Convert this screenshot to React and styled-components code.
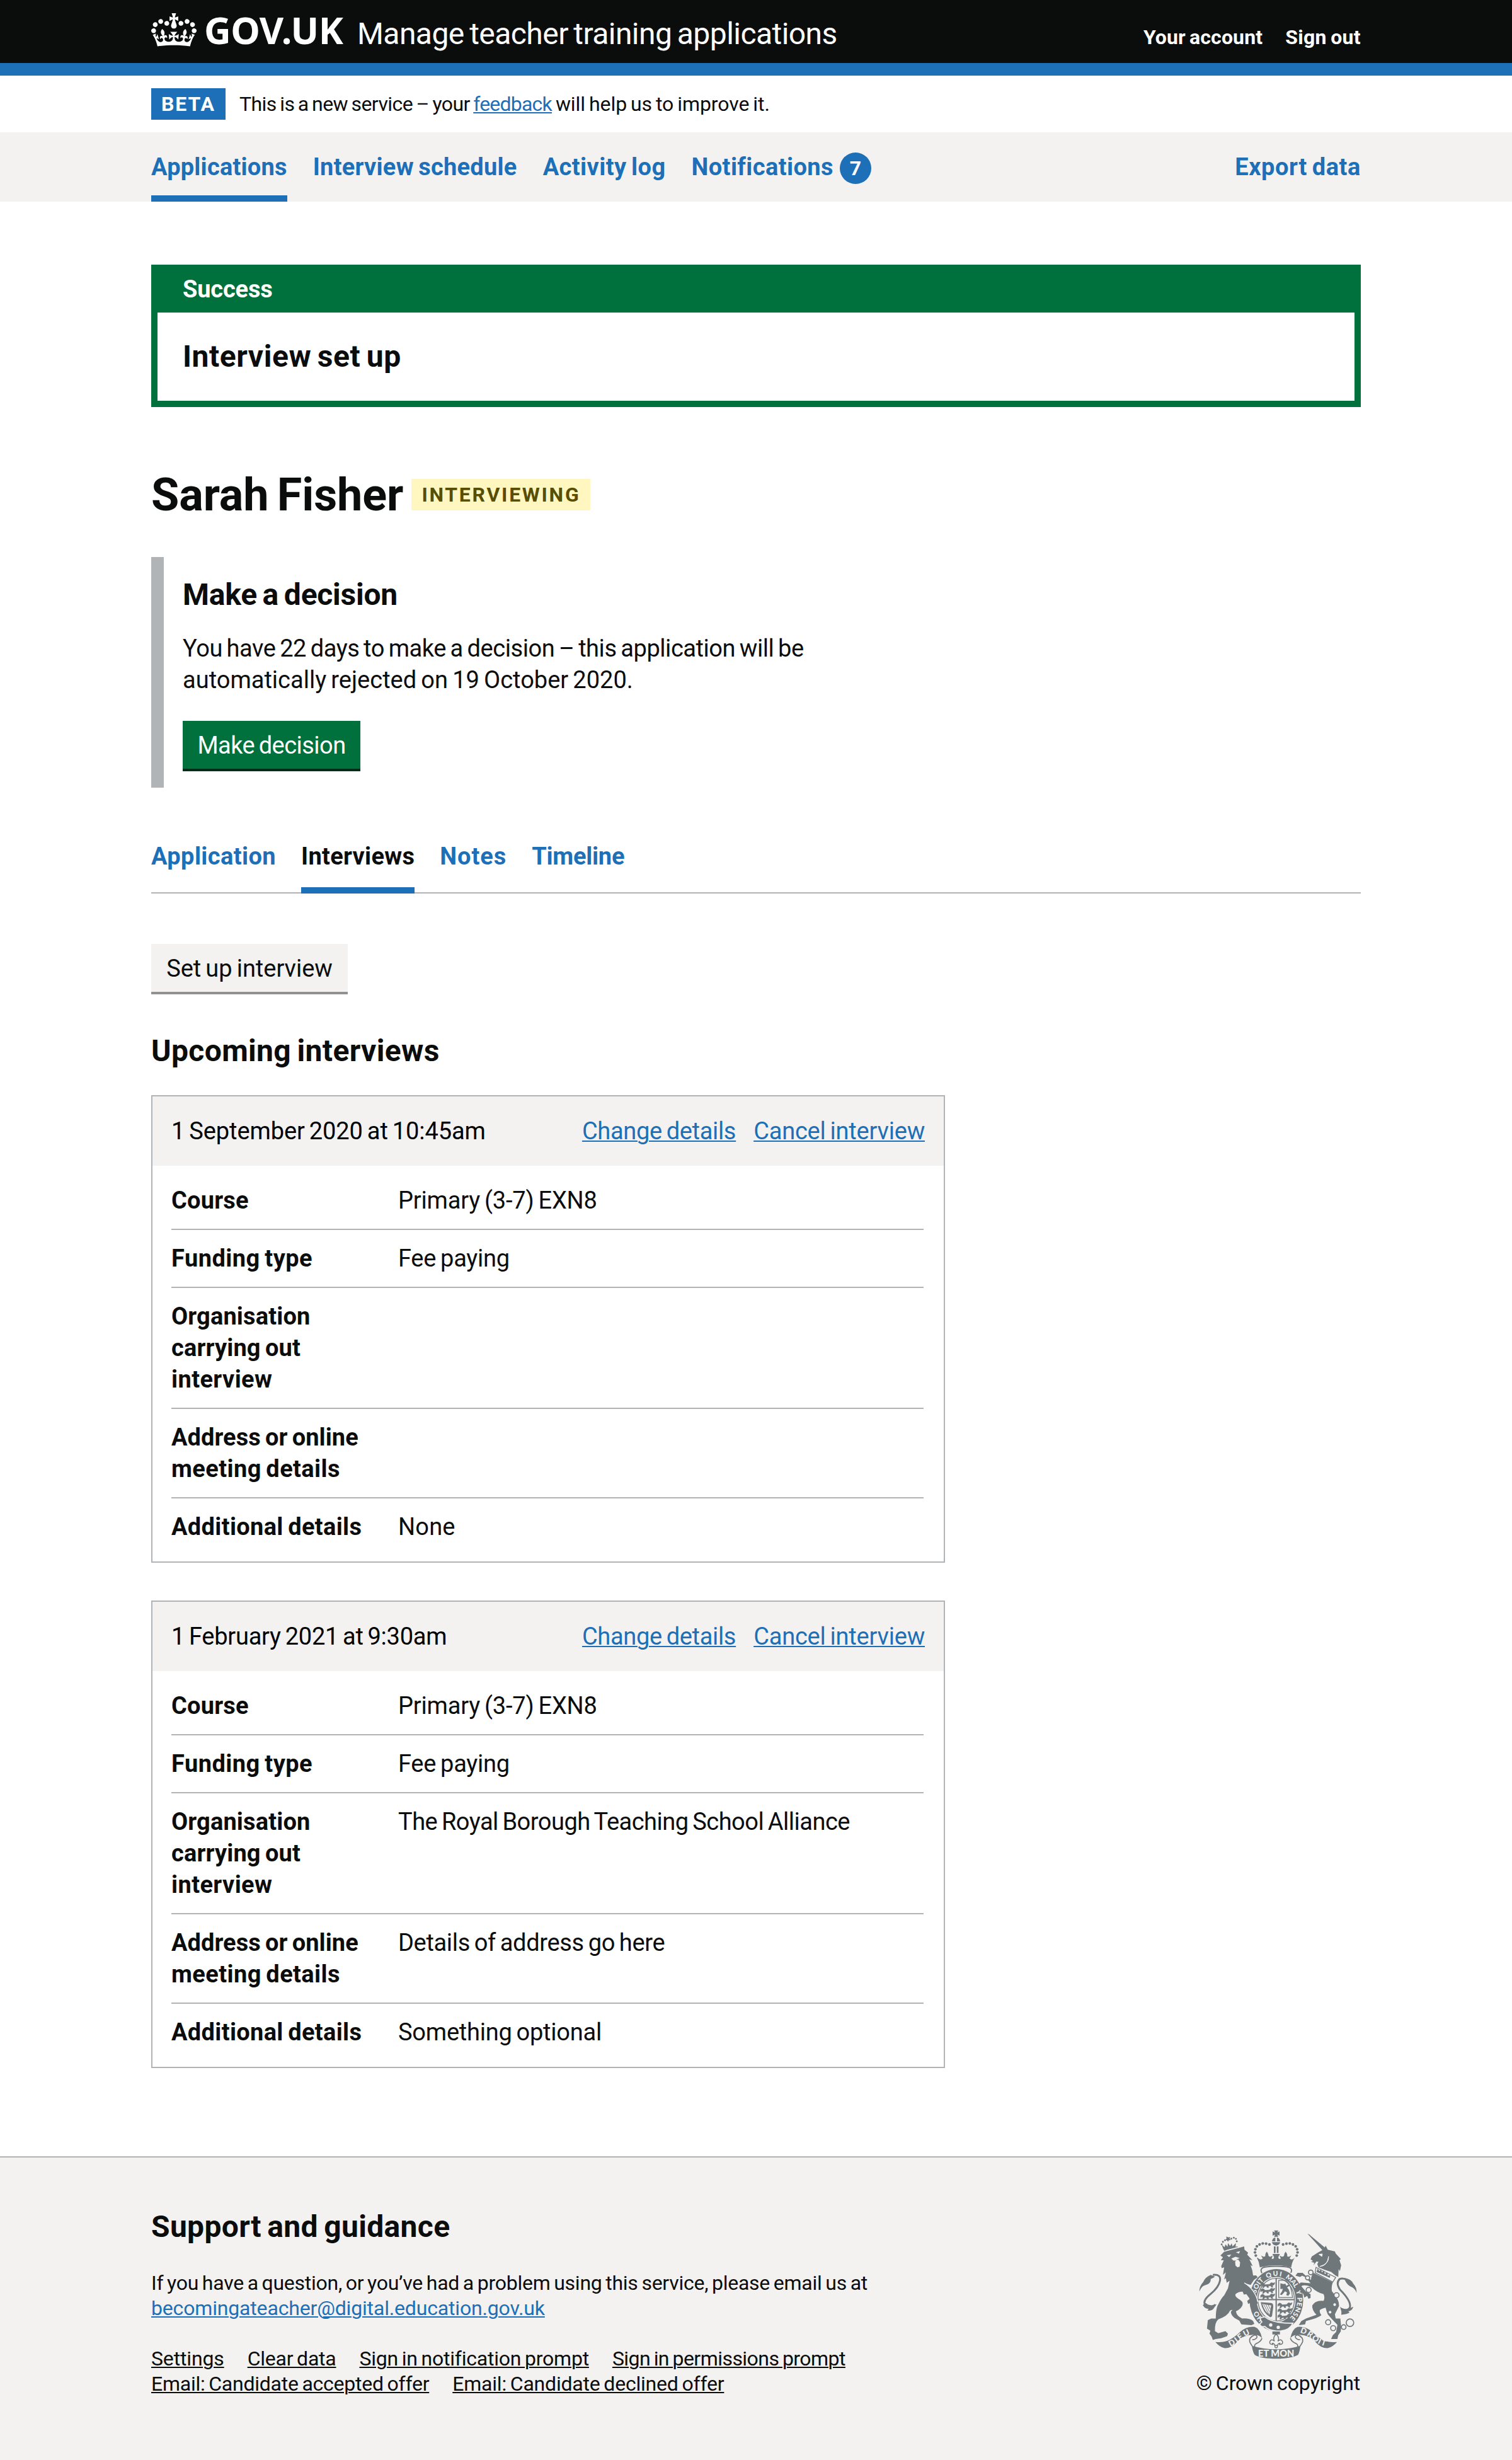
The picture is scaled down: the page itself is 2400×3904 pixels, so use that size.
import React from 'react';
import styled, { createGlobalStyle, css } from 'styled-components';

const c = {
  black: '#0b0c0c',
  white: '#ffffff',
  blue: '#1d70b8',
  green: '#00703c',
  greenShadow: '#002d18',
  light: '#f3f2f1',
  border: '#b1b4b6',
  buttonShadow: '#929191',
  crest: '#6f777b',
};

const GlobalStyle = createGlobalStyle`
  *, *::before, *::after { box-sizing: border-box; }
  body {
    margin: 0;
    background: ${c.white};
    color: ${c.black};
    font-family: Roboto, 'Liberation Sans', sans-serif;
    font-size: 38px;
    line-height: 50px;
  }
  h1, h2, h3, p, dl, dd, dt { margin: 0; }
`;

/* Word gaps are tightened and the width is handed back to the letters,
   so a label keeps its overall length. */
const WORD_TIGHTEN = 0.06;
const tracking = css`
  white-space: nowrap;
  word-spacing: -${WORD_TIGHTEN}em;
  letter-spacing: ${({ children, $ls = 0 }) => {
    const text = String(children);
    const gaps = text.split(' ').length - 1;
    const share = (gaps * WORD_TIGHTEN) / Math.max(text.length - 1, 1);
    return `calc(${$ls}px + ${share.toFixed(4)}em)`;
  }};
`;
const T = styled.span`
  ${tracking}
`;
const Link = styled.a`
  ${tracking}
  color: ${({ $dark }) => ($dark ? c.black : c.blue)};
  text-decoration: underline;
  text-decoration-thickness: 2px;
  text-underline-offset: 2px;
`;

const Wrap = styled.div`
  width: 1920px;
  margin: 0 auto;
`;

/* ---------- Header ---------- */
const Header = styled.header`
  background: ${c.black};
  color: ${c.white};
  border-bottom: 20px solid ${c.blue};
  height: 120px;
`;
const HeaderRow = styled(Wrap)`
  display: flex;
  align-items: baseline;
  padding-top: 17px;
  line-height: 60px;
`;
const Brand = styled.a`
  display: flex;
  align-items: baseline;
  width: 327px;
  font-family: 'Noto Sans', 'Open Sans', sans-serif;
  font-weight: 700;
  font-size: 59px;
  color: ${c.white};
  svg {
    align-self: flex-start;
    margin: 4px 12px 0 0;
    flex: none;
  }
`;
const ServiceName = styled.span`
  font-size: 48px;
`;
const AccountNav = styled.nav`
  margin-left: auto;
  display: flex;
  gap: 36px;
  font-size: 32px;
  font-weight: 700;
`;

/* ---------- Phase banner ---------- */
const PhaseBanner = styled(Wrap)`
  display: flex;
  gap: 22px;
  padding: 20px 0;
  font-size: 32px;
`;
const Tag = styled.strong`
  height: 50px;
  padding: 0 16px;
  font-size: 32px;
  line-height: 50px;
  font-weight: 700;
  background: ${({ $yellow }) => ($yellow ? '#fff7bf' : c.blue)};
  color: ${({ $yellow }) => ($yellow ? '#594d00' : c.white)};
`;

/* ---------- Primary navigation ---------- */
const PrimaryNav = styled.nav`
  background: ${c.light};
`;
const NavRow = styled(Wrap)`
  display: flex;
  gap: 41px;
  padding-top: 30px;
`;
const NavItem = styled.a`
  display: flex;
  height: 80px;
  color: ${c.blue};
  font-weight: 700;
  border-bottom: 10px solid ${({ $current }) => ($current ? c.blue : 'transparent')};
  margin-left: ${({ $end }) => ($end ? 'auto' : 0)};
`;
const Badge = styled.span`
  width: 50px;
  height: 50px;
  margin: 2px 0 0 10px;
  border-radius: 50%;
  background: ${c.blue};
  color: ${c.white};
  font-size: 32px;
  text-align: center;
`;

/* ---------- Success banner ---------- */
const Banner = styled.section`
  margin-top: 100px;
  border: 10px solid ${c.green};
  border-top-width: 0;
`;
const BannerHead = styled.div`
  background: ${c.green};
  color: ${c.white};
  font-weight: 700;
  padding: 14px 40px 12px;
`;
const BannerBody = styled.div`
  padding: 40px;
`;
const H2 = styled.h2`
  font-size: 48px;
  line-height: 60px;
  font-weight: 700;
`;

/* ---------- Candidate heading ---------- */
const TitleRow = styled.div`
  display: flex;
  align-items: flex-start;
  gap: 13px;
  margin-top: 100px;
  ${Tag} { margin-top: 14px; }
`;
const H1 = styled.h1`
  font-size: 72px;
  line-height: 80px;
  font-weight: 700;
`;

const Inset = styled.section`
  margin-top: 58px;
  border-left: 20px solid ${c.border};
  padding: 30px 0 30px 30px;
  p { margin: 30px 0 40px; }
`;
const Button = styled.button`
  display: block;
  width: ${({ $w }) => $w}px;
  height: 76px;
  padding: 14px 0 12px;
  border: 0;
  font: inherit;
  line-height: 50px;
  text-align: center;
  color: ${({ $secondary }) => ($secondary ? c.black : c.white)};
  background: ${({ $secondary }) => ($secondary ? c.light : c.green)};
  box-shadow: 0 4px 0 ${({ $secondary }) => ($secondary ? c.buttonShadow : c.greenShadow)};
`;

/* ---------- Tabs ---------- */
const Tabs = styled.nav`
  display: flex;
  gap: 40px;
  margin: 84px 0 80px;
  box-shadow: inset 0 -2px 0 ${c.border};
`;
const Tab = styled.a`
  height: 84px;
  font-weight: 700;
  color: ${({ $current }) => ($current ? c.black : c.blue)};
  border-bottom: ${({ $current }) => ($current ? `10px solid ${c.blue}` : '0')};
`;

/* ---------- Interview cards ---------- */
const Section = styled.section`
  margin-top: 64px;
`;
const Card = styled.article`
  width: 1260px;
  margin-top: ${({ $first }) => ($first ? 40 : 60)}px;
  border: 2px solid ${c.border};
`;
const CardHead = styled.header`
  display: flex;
  gap: 28px;
  padding: 30px;
  background: ${c.light};
  color: #000;
  ${T} { margin-right: auto; }
`;
const Details = styled.dl`
  padding: 10px 32px 10px 30px;
`;
const Row = styled.div`
  display: grid;
  grid-template-columns: 360px 1fr;
  padding: 20px 0;
  border-bottom: 2px solid ${c.border};
  &:last-child { border-bottom: 0; }
`;
const Key = styled.dt`
  font-weight: 700;
  display: flex;
  flex-direction: column;
`;

/* ---------- Footer ---------- */
const Footer = styled.footer`
  margin-top: 140px;
  height: 482px;
  background: ${c.light};
  border-top: 2px solid ${c.border};
  font-size: 32px;
  line-height: 40px;
`;
const FooterRow = styled(Wrap)`
  display: flex;
  justify-content: space-between;
  padding-top: 80px;
`;
const FooterMain = styled.div`
  width: 1150px;
  p { margin: 39px 0 40px; display: flex; flex-direction: column; align-items: flex-start; }
`;
const FooterLinks = styled.div`
  display: flex;
  flex-wrap: wrap;
  column-gap: 37px;
`;
const Copyright = styled.div`
  width: 262px;
  padding-top: 35px;
  display: flex;
  flex-direction: column;
  align-items: center;
  svg { display: block; margin-bottom: 18px; }
`;

function Crown() {
  return (
    <svg width="72" height="53" viewBox="0 0 132 97" fill="#fff">
      <path fillRule="evenodd" d="M25 30.2c3.5 1.5 7.7-.2 9.1-3.7 1.5-3.6-.2-7.8-3.9-9.2-3.6-1.4-7.6.3-9.1 3.9-1.4 3.5.3 7.5 3.9 9zM9 39.5c3.6 1.5 7.8-.2 9.2-3.7 1.5-3.6-.2-7.8-3.9-9.1-3.6-1.5-7.6.2-9.1 3.8-1.4 3.5.3 7.5 3.8 9zM4.4 57.2c3.5 1.5 7.7-.2 9.1-3.8 1.5-3.6-.2-7.7-3.9-9.1-3.5-1.5-7.6.3-9.1 3.8-1.4 3.5.3 7.6 3.9 9.1zm38.3-21.4c3.5 1.5 7.7-.2 9.1-3.8 1.5-3.6-.2-7.7-3.9-9.1-3.6-1.5-7.6.3-9.1 3.8-1.3 3.6.4 7.7 3.9 9.1zm64.4-5.6c-3.6 1.5-7.8-.2-9.1-3.7-1.5-3.6.2-7.8 3.8-9.2 3.6-1.4 7.7.3 9.2 3.9 1.3 3.5-.4 7.5-3.9 9zm15.9 9.3c-3.6 1.5-7.7-.2-9.1-3.7-1.5-3.6.2-7.8 3.7-9.1 3.6-1.5 7.7.2 9.2 3.8 1.5 3.5-.3 7.5-3.8 9zm4.7 17.7c-3.6 1.5-7.8-.2-9.2-3.8-1.5-3.6.2-7.7 3.9-9.1 3.6-1.5 7.7.3 9.2 3.8 1.3 3.5-.4 7.6-3.9 9.1zM89.3 35.8c-3.6 1.5-7.8-.2-9.2-3.8-1.4-3.6.2-7.7 3.9-9.1 3.6-1.5 7.7.3 9.2 3.8 1.4 3.6-.3 7.7-3.9 9.1zM69.7 17.7l8.9 4.7V9.3l-8.9 2.8c-.2-.3-.5-.6-.9-.9L72.4 0H59.6l3.5 11.2c-.3.3-.6.5-.9.9l-8.8-2.8v13.1l8.8-4.7c.3.3.6.7.9.9l-5 15.4v.1c-.2.8-.4 1.6-.4 2.4 0 4.1 3.1 7.5 7 8.1h.2c.3 0 .7.1 1 .1.4 0 .7 0 1-.1h.2c4-.6 7.1-4.1 7.1-8.1 0-.8-.1-1.7-.4-2.4V34l-5.1-15.4c.4-.2.7-.6 1-.9zM66 92.8c16.9 0 32.8 1.1 47.1 3.2 4-16.9 8.9-26.7 14-33.5l-9.6-3.4c1 4.9 1.1 7.2 0 10.2-1.5-1.4-3-4.3-4.2-8.7L108.6 76c2.8-2 5-3.2 7.5-3.3-4.4 9.4-10 11.9-13.6 11.2-4.3-.8-6.3-4.6-5.6-7.9 1-4.7 5.7-5.9 8-.5 4.3-8.7-3-11.4-7.6-8.8 7.1-7.2 7.9-13.5 2.1-21.1-8 6.1-8.1 12.3-4.5 20.8-4.7-5.4-12.1-2.5-9.5 6.2 3.4-5.2 7.9-2 7.2 3.1-.6 4.3-6.4 7.8-13.5 7.2-10.3-.9-10.9-8-11.2-13.8 2.5-.5 7.1 1.8 11 7.3L80.2 60c-4.1 4.4-8 5.3-12.3 5.4 1.4-4.4 8-11.6 8-11.6H55.5s6.4 7.2 7.9 11.6c-4.2-.1-8-1-12.3-5.4l1.4 16.4c3.9-5.5 8.5-7.7 10.9-7.3-.3 5.8-.9 12.8-11.1 13.8-7.2.6-12.9-2.9-13.5-7.2-.7-5 3.8-8.3 7.1-3.1 2.7-8.7-4.6-11.6-9.4-6.2 3.7-8.5 3.6-14.7-4.6-20.8-5.8 7.6-5 13.9 2.2 21.1-4.7-2.6-11.9.1-7.7 8.8 2.3-5.5 7.1-4.2 8.1.5.7 3.3-1.3 7.1-5.7 7.9-3.5.7-9-1.8-13.5-11.2 2.5.1 4.7 1.3 7.5 3.3l-4.7-15.4c-1.2 4.4-2.7 7.2-4.3 8.7-1.1-3-.9-5.3 0-10.2l-9.5 3.4c5 6.9 9.9 16.7 14 33.5 14.8-2.1 30.8-3.2 47.7-3.2z" />
    </svg>
  );
}

const crownBeads = [
  [466, 187], [450, 183], [434, 182], [419, 187], [406, 196], [399, 210], [397, 225], [401, 240],
];

/* Words round the garter: start along the arc, and length */
const garterWords = [
  ['SOIT', 7, 74],
  ['QUI', 98, 70],
  ['MAL', 188, 68],
  ['Y', 270, 20],
  ['PENSE', 302, 108],
];

/* One quarter's three walking lions, drawn as rows of a small beast */
function Beasts({ x, y }) {
  return [0, 1, 2].map((i) => (
    <path
      key={i}
      transform={`translate(${x} ${y + i * 27})`}
      d="M0 6l8-6 8 3 4 6 22-2 8-8 10 2 8-2-4 10-8 4 2 8h-6l-4-7-12 1 2 7h-7l-4-7-8 2-4 6h-6l3-9-6-2-6 4z"
      stroke="#6f777b"
      strokeWidth="2"
    />
  ));
}

function RoyalArms() {
  const bg = c.light;
  const ribbon = 'M208 652Q240 656 264 647Q296 634 326 604Q358 576 396 580Q420 588 431 634Q418 618 396 618Q344 616 314 648Q284 684 250 681Q226 674 208 652Z';
  const curl = 'M396 618Q366 630 372 652Q378 664 384 672M430 634Q426 650 402 660Q392 666 396 678M396 618Q412 622 404 634Q392 644 384 640';
  return (
    <svg width="252" height="205" viewBox="130 118 756 616" fill={c.crest} stroke="none">
      <defs>
        <path id="garter" d="M401 428A100 113 0 1 1 556 543" />
        <path id="garterLow" d="M438 543A100 113 0 0 1 403 484" />
        <path id="dieu" d="M280 674Q306 662 330 640Q352 622 380 612" />
        <path id="droit" d="M611 607Q646 616 672 642Q704 668 742 674" />
      </defs>

      {/* imperial crown */}
      <path d="M488 120h20l-5 10 11-5v20l-11-5 5 10h-20l5-10-12 5v-20l12 5zM478 172q2-16 16-19v19zM502 153q13 3 15 19h-15zM478 176h39q-2 15-19 16-18-1-20-16zM487 196h8v32h-8zM501 196h8v32h-8z" />
      {crownBeads.map(([x, y]) => (
        <React.Fragment key={x}>
          <circle cx={x} cy={y} r="6.5" />
          <circle cx={997 - x} cy={y} r="6.5" />
        </React.Fragment>
      ))}
      <path d="M410 250q12 14 24 4l-8-14 12 6q16-2 16-26q2 24 16 26l12-6-6 14q10 6 12-6l-8-16h36l-8 16q2 12 12 6l-6-14 12 6q16-2 16-26q0 24 16 26l12-6-8 14q12 10 24-4-14 24-16 46-74-20-150 0-2-24-14-46z" />
      <path d="M453 222q-12 14-4 24h9q8-10-5-24zM543 222q-12 14-4 24h9q8-10-5-24z" />
      <path d="M430 324Q416 298 450 294Q498 288 548 294Q580 298 568 322" fill={bg} stroke={c.crest} strokeWidth="6" />

      {/* garter and shield */}
      <ellipse cx="499" cy="452" rx="128" ry="148" />
      <ellipse cx="498" cy="450" rx="93" ry="108" fill={bg} />
      <ellipse cx="498" cy="450" rx="87" ry="102" fill="none" stroke={c.crest} strokeWidth="4" />
      <path d="M495 348h6v202h-6zM411 447h174v6H411z" />
      <Beasts x={424} y={370} />
      <Beasts x={506} y={466} />
      <path d="M510 358h36q26 26 30 82h-66z" fill="none" stroke={c.crest} strokeWidth="4" />
      <path d="M518 372l14 4 10-2 4 10 12-6 4 6-12 8 8 10 6 18-8 12-10-4 4-12-10-6-8 10-8 8-8-2 10-16 4-12-12 2z" />
      <path d="M424 462l48 4q14 0 12 20l-6 44-8 4q-36-20-46-72zm8 8q10 36 34 52l8-44z" fillRule="evenodd" />
      <path d="M438 472l24 46M448 472l18 36M458 472l12 24" fill="none" stroke={c.crest} strokeWidth="3" />
      <g fill={bg} fontFamily="Lato, sans-serif" fontWeight="900" fontSize="32">
        {garterWords.map(([word, start, length]) => (
          <text key={word}>
            <textPath href="#garter" startOffset={start} textLength={length}>{word}</textPath>
          </text>
        ))}
        <text><textPath href="#garterLow">HO</textPath></text>
      </g>
      <path d="M424 536l20-4 14 10q40 22 120 20-18 40-78 38-40-4-56-22-22 4-24-12l10-10q-10-10-6-20z" stroke={bg} strokeWidth="5" />
      <circle cx="472" cy="571" r="8" fill={bg} />
      <circle cx="508" cy="582" r="8" fill={bg} />

      {/* lion */}
      <path d="M232 240L250 222L322 203L345 196L347 212L364 226L360 236L385 262L370 258L386 290L376 286L384 310L388 335L402 334L410 343L392 356L376 380L350 372L385 400L402 440L410 466L400 480L392 470L384 476L376 466L364 470L360 456L372 446L356 424L344 426L338 412Q318 412 304 424Q300 436 318 446Q342 458 338 474Q334 492 306 506Q310 530 336 540Q372 538 388 552L394 566L380 572L360 570L332 568L322 550L300 538Q282 524 282 508L290 498L278 502Q268 528 222 544Q204 560 206 600L222 610L256 600L268 612L264 624L236 634L210 638L196 642L190 626L180 612L184 598L168 588L172 548L188 540L210 540Q210 500 218 480Q238 440 250 430L268 396L276 360L262 370L258 348L250 354L258 320L244 332L250 296L238 300L236 290L248 262L234 262L244 248Z" />
      <path d="M346 370Q396 400 412 462" fill="none" stroke={bg} strokeWidth="4" />
      <path d="M262 238l22-3-10 12zM306 224l20-5-6 12zM284 254l20-8 20 6-14 6 2 6h-18zM302 268l14-10 10 14-2 20-10 4-10-8z" fill={bg} />
      <path d="M246 214l-10-28 6-4 12 18 8-20 8-2 4 18 14-10 0-16 12-4 8 6 4 24-6 8q-32 4-60 18z" fill={bg} />
      <path d="M246 210l-8-22 14 12 4-14 10 12 2-18 10 14 8-12 4 14 16-16-2 22-54 14z" />
      <path d="M250 216q28-14 64-18" fill="none" stroke={c.crest} strokeWidth="4" />
      {[[238, 186], [244, 174], [254, 167], [266, 164], [284, 159], [296, 155], [306, 160], [310, 172]].map(([x, y]) => (
        <circle key={x} cx={x} cy={y} r="4.5" />
      ))}
      <path d="M260 149l10 4 8-2-2 9 5 6-9 1-4 7-4-8-8 0 5-7z" />
      <path d="M196 332Q236 328 230 360Q224 392 184 424Q148 452 158 474Q176 496 208 474" fill="none" stroke={c.crest} strokeWidth="9" />
      <path d="M132 412Q130 388 150 366Q160 342 186 332L206 340Q196 348 186 352Q188 376 158 382Q140 388 132 412ZM148 476L162 466Q180 484 214 472L198 494Q190 504 170 502L176 494Q158 494 148 476Z" />

      {/* unicorn */}
      <path d="M647 135L656 140L738 208L724 220Z" />
      <path d="M662 258L668 244L696 226L726 210L734 192L744 212L778 220L782 230L806 256L800 262L808 286L802 314L796 304L794 342L780 334L760 318L730 308L700 296L694 280L700 270L690 268L676 286L680 274L664 270L674 266Z" />
      <path d="M748 244Q752 278 706 292Q742 290 748 244ZM702 234l16-2-2 12z" fill={bg} stroke={bg} strokeWidth="3" />
      <path d="M688 296L782 344L768 366L684 322Z" fill={bg} stroke={c.crest} strokeWidth="4" />
      <path d="M690 318l6-16 8 12 8-8 4 14 10-8 4 16 12-8 2 16 12-4-2 14z" />
      <path d="M676 322L768 368Q760 390 764 410Q800 450 798 480L778 520L782 540L804 540L808 580L806 602L794 620L790 638L760 638L768 620L784 604L790 570Q760 540 744 520Q736 500 734 488Q714 492 706 500Q704 512 714 524Q700 538 640 552L636 568L606 572L618 552L640 540L690 522Q668 500 670 478Q684 452 724 456Q732 440 724 424Q690 414 668 392L650 384Q624 378 618 386L640 412L662 424L662 442L652 446L646 432L632 440L628 424L606 398L600 380L616 368L662 372L640 344L622 336L612 342L590 336L600 322L624 322L648 344L664 356Q664 336 676 322Z" />
      <path d="M850 366Q822 342 800 352Q782 372 802 402Q856 456 850 486Q842 508 808 494" fill="none" stroke={c.crest} strokeWidth="9" />
      <path d="M882 418Q882 390 866 374Q858 352 822 346Q832 376 850 386Q874 394 882 418ZM802 484Q824 506 866 484Q860 504 842 506L848 512Q832 522 808 522Q812 506 802 484Z" />
      <g fill={bg} stroke={c.crest} strokeWidth="5">
        <circle cx="663" cy="320" r="11" />
        <circle cx="648" cy="346" r="10" />
        <circle cx="653" cy="404" r="12" />
        <circle cx="786" cy="429" r="12" />
        <circle cx="777" cy="474" r="9" />
        <circle cx="755" cy="510" r="9" />
        <circle cx="746" cy="558" r="12" />
        <circle cx="770" cy="586" r="12" />
        <circle cx="820" cy="581" r="11" />
        <circle cx="850" cy="560" r="18" />
      </g>

      {/* motto scroll */}
      <path d={ribbon} />
      <path d={ribbon} transform="matrix(-1 0 0 1 996 0)" />
      <g fill="none" stroke={c.crest} strokeWidth="5">
        <path d={curl} />
        <path d={curl} transform="matrix(-1 0 0 1 996 0)" />
      </g>
      <path d="M382 670Q498 704 614 670Q610 700 602 714Q570 732 498 732Q426 732 396 714Q386 700 382 670Z" />
      <g fill={bg} fontFamily="Lato, sans-serif" fontWeight="900">
        <text x="412" y="722" fontSize="44" textLength="172">ET MON</text>
        <text fontSize="38"><textPath href="#dieu" textLength="112">DIEU</textPath></text>
        <text fontSize="38"><textPath href="#droit" textLength="138">DROIT</textPath></text>
      </g>
      <path d="M480 602h36v14h-36z" />
      <path d="M498 614q-18 18-8 34-16-14-22 2-4 14 14 14l-2-6q10 0 12 12h12q2-12 12-12l-2 6q18 0 14-14-6-16-22-2 10-16-8-34z" fill={bg} stroke={c.crest} strokeWidth="4.5" />
      <circle cx="498" cy="674" r="6" fill={bg} stroke={c.crest} strokeWidth="4" />
    </svg>
  );
}

const keys = {
  course: [['Course', 0.19]],
  funding: [['Funding type', 0.25]],
  organisation: [['Organisation', 0.15], ['carrying out', -0.06], ['interview', 0.4]],
  address: [['Address or online', -0.23], ['meeting details', 0.25]],
  additional: [['Additional details', 0.2]],
};

const interviews = [
  {
    title: ['1 September 2020 at 10:45am', -0.45],
    values: {
      course: ['Primary (3-7) EXN8', -0.45],
      funding: ['Fee paying', -0.5],
      organisation: null,
      address: null,
      additional: ['None', 0.2],
    },
  },
  {
    title: ['1 February 2021 at 9:30am', -0.63],
    values: {
      course: ['Primary (3-7) EXN8', -0.45],
      funding: ['Fee paying', -0.5],
      organisation: ['The Royal Borough Teaching School Alliance', -0.78],
      address: ['Details of address go here', -0.7],
      additional: ['Something optional', -0.36],
    },
  },
];

const footerLinks = [
  ['Settings', -0.15],
  ['Clear data', -0.45],
  ['Sign in notification prompt', -0.45],
  ['Sign in permissions prompt', -0.77],
  ['Email: Candidate accepted offer', -0.44],
  ['Email: Candidate declined offer', -0.4],
];

function InterviewCard({ interview, first }) {
  const [title, ls] = interview.title;
  return (
    <Card $first={first}>
      <CardHead>
        <T $ls={ls}>{title}</T>
        <Link $ls={-0.5}>Change details</Link>
        <Link $ls={-0.36}>Cancel interview</Link>
      </CardHead>
      <Details>
        {Object.entries(keys).map(([id, lines]) => {
          const value = interview.values[id];
          return (
            <Row key={id}>
              <Key>
                {lines.map(([text, track]) => <T key={text} $ls={track}>{text}</T>)}
              </Key>
              <dd>{value && <T $ls={value[1]}>{value[0]}</T>}</dd>
            </Row>
          );
        })}
      </Details>
    </Card>
  );
}

export default function App() {
  return (
    <>
      <GlobalStyle />
      <Header>
        <HeaderRow>
          <Brand>
            <Crown />
            <T $ls={-0.5}>GOV.UK</T>
          </Brand>
          <ServiceName><T $ls={-0.8}>Manage teacher training applications</T></ServiceName>
          <AccountNav>
            <T $ls={-0.05}>Your account</T>
            <T $ls={0.05}>Sign out</T>
          </AccountNav>
        </HeaderRow>
      </Header>

      <PhaseBanner>
        <Tag><T $ls={1.9}>BETA</T></Tag>
        <span>
          <T $ls={-1.05}>{'This is a new service – your '}</T>
          <Link $ls={-0.8}>feedback</Link>
          <T $ls={-0.49}>{' will help us to improve it.'}</T>
        </span>
      </PhaseBanner>

      <PrimaryNav>
        <NavRow>
          <NavItem $current><T $ls={0.22}>Applications</T></NavItem>
          <NavItem><T $ls={0.12}>Interview schedule</T></NavItem>
          <NavItem><T $ls={0.21}>Activity log</T></NavItem>
          <NavItem><T $ls={0.4}>Notifications</T><Badge>7</Badge></NavItem>
          <NavItem $end><T $ls={0.36}>Export data</T></NavItem>
        </NavRow>
      </PrimaryNav>

      <Wrap as="main">
        <Banner>
          <BannerHead><T $ls={-0.17}>Success</T></BannerHead>
          <BannerBody><H2><T $ls={0.16}>Interview set up</T></H2></BannerBody>
        </Banner>

        <TitleRow>
          <H1><T $ls={-0.5}>Sarah Fisher</T></H1>
          <Tag $yellow><T $ls={2.71}>INTERVIEWING</T></Tag>
        </TitleRow>

        <Inset>
          <H2><T $ls={-0.66}>Make a decision</T></H2>
          <p>
            <T $ls={-0.89}>You have 22 days to make a decision – this application will be</T>
            <br />
            <T $ls={-0.27}>automatically rejected on 19 October 2020.</T>
          </p>
          <Button $w={282}><T $ls={-0.73}>Make decision</T></Button>
        </Inset>

        <Tabs>
          <Tab><T $ls={0.4}>Application</T></Tab>
          <Tab $current><T $ls={0.3}>Interviews</T></Tab>
          <Tab><T $ls={0.94}>Notes</T></Tab>
          <Tab><T $ls={-0.25}>Timeline</T></Tab>
        </Tabs>

        <Button $secondary $w={312}><T $ls={-0.33}>Set up interview</T></Button>

        <Section>
          <H2><T $ls={0.19}>Upcoming interviews</T></H2>
          {interviews.map((item, i) => (
            <InterviewCard key={item.title[0]} interview={item} first={i === 0} />
          ))}
        </Section>
      </Wrap>

      <Footer>
        <FooterRow>
          <FooterMain>
            <H2><T $ls={0.03}>Support and guidance</T></H2>
            <p>
              <T $ls={-0.62}>If you have a question, or you’ve had a problem using this service, please email us at</T>
              <Link $ls={-0.17}>becomingateacher@digital.education.gov.uk</Link>
            </p>
            <FooterLinks>
              {footerLinks.map(([text, ls]) => <Link key={text} $dark $ls={ls}>{text}</Link>)}
            </FooterLinks>
          </FooterMain>
          <Copyright>
            <RoyalArms />
            <T $ls={-0.28}>© Crown copyright</T>
          </Copyright>
        </FooterRow>
      </Footer>
    </>
  );
}
